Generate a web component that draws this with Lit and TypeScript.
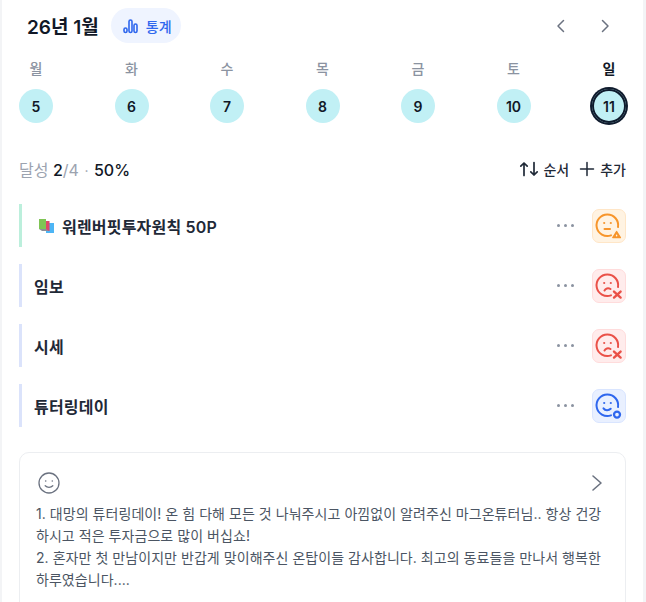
import { html, css, svg, LitElement } from 'lit';
import { customElement } from 'lit/decorators.js';

const days = [
  { label: '월', num: 5 },
  { label: '화', num: 6 },
  { label: '수', num: 7 },
  { label: '목', num: 8 },
  { label: '금', num: 9 },
  { label: '토', num: 10 },
  { label: '일', num: 11, today: true },
];

type Tone = 'warn' | 'fail' | 'done';

const tasks: { title: string; tone: Tone; bar: string; emoji?: boolean }[] = [
  { title: '워렌버핏투자원칙 50P', tone: 'warn', bar: 'mint', emoji: true },
  { title: '임보', tone: 'fail', bar: 'blue' },
  { title: '시세', tone: 'fail', bar: 'blue' },
  { title: '튜터링데이', tone: 'done', bar: 'blue' },
];

const mouth = {
  warn: svg`<path d="M12.5 20h5.5" />`,
  fail: svg`<path d="M12.5 21.5c1-2 3.5-3 6-1.5" />`,
  done: svg`<path d="M11.5 19.4c1.6 2.4 5.2 2.4 7.2.4" />`,
};

const badge = {
  warn: svg`<path d="M24.6 22.6l3.8 6h-7.6z" fill="currentColor" stroke-width="1.4" stroke-linejoin="round" /><path d="M24.6 26.2v.6" stroke="#fff3e2" stroke-width="1.4" />`,
  fail: svg`<path d="M22 22.6l6.6 6M28.6 22.6l-6.6 6" stroke-width="2.4" />`,
  done: svg`<circle cx="25" cy="25.6" r="3" fill="none" stroke-width="2.3" />`,
};

function faceIcon(tone: Tone) {
  return html`<svg width="34" height="34" viewBox="0 0 34 34" fill="none" stroke="currentColor" stroke-width="2" stroke-linecap="round">
    <path d="M19 26.4A10.8 10.8 0 1 1 26 18" />
    <circle cx="12.2" cy="14" r="1.1" fill="currentColor" stroke="none" />
    <circle cx="18.8" cy="14" r="1.1" fill="currentColor" stroke="none" />
    ${mouth[tone]} ${badge[tone]}
  </svg>`;
}

const chevronLeft = html`<svg width="16" height="16" viewBox="0 0 16 16" fill="none" stroke="currentColor" stroke-width="1.5" stroke-linecap="round" stroke-linejoin="round"><path d="M10.5 2.5L5 8l5.5 5.5" /></svg>`;
const chevronRight = html`<svg width="16" height="16" viewBox="0 0 16 16" fill="none" stroke="currentColor" stroke-width="1.5" stroke-linecap="round" stroke-linejoin="round"><path d="M5.5 2.5L11 8l-5.5 5.5" /></svg>`;

@customElement('app-root')
export class AppRoot extends LitElement {
  static styles = css`
    :host {
      display: block;
      height: 602px;
      overflow: hidden;
      background: #fff;
      font-family: Inter, 'Noto Sans CJK KR', sans-serif;
      color: #111827;
      border-left: 2px solid #f3f4f6;
      border-right: 3px solid #f3f4f6;
      box-sizing: border-box;
    }
    .page {
      display: flex;
      flex-direction: column;
      padding: 8px 17px 0 17px;
    }
    .head {
      display: flex;
      align-items: center;
      height: 35px;
    }
    .title {
      margin-left: 8px;
      font-size: 19px;
      font-weight: 600;
    }
    .pill {
      display: flex;
      align-items: center;
      gap: 8px;
      height: 35px;
      width: 70px;
      box-sizing: border-box;
      padding-left: 12px;
      margin-left: 12px;
      border-radius: 18px;
      background: #eff4ff;
      color: #2f67ee;
      font-size: 14px;
      font-weight: 500;
    }
    .nav {
      margin-left: auto;
      display: flex;
      gap: 28px;
      margin-right: 13px;
      color: #6b7280;
    }
    .nav svg {
      display: block;
    }
    .week {
      display: flex;
      justify-content: space-between;
      margin-top: 16px;
    }
    .day {
      width: 34px;
      display: flex;
      flex-direction: column;
      align-items: center;
      gap: 10px;
    }
    .day-label {
      font-size: 14px;
      line-height: 20px;
      font-weight: 500;
      color: #8b93a1;
    }
    .day-label.today {
      color: #111827;
      font-weight: 600;
    }
    .circle {
      width: 34px;
      height: 34px;
      border-radius: 50%;
      display: flex;
      align-items: center;
      justify-content: center;
      background: #c1f0f5;
      font-size: 14px;
      font-weight: 600;
    }
    .circle.today {
      box-shadow: 0 0 0 2px #0f1b2d, inset 0 0 0 2px #0f1b2d;
    }
    .stats {
      display: flex;
      align-items: center;
      justify-content: space-between;
      margin-top: 34px;
      height: 24px;
    }
    .rate {
      font-size: 16px;
      color: #9ca3af;
    }
    .rate b {
      font-weight: 500;
      color: #111827;
    }
    .rate .dot {
      margin: 0 1px;
      font-size: 14px;
    }
    .actions {
      display: flex;
      gap: 9px;
      font-size: 14px;
      font-weight: 500;
      color: #1f2937;
    }
    .action {
      display: flex;
      align-items: center;
      gap: 4px;
    }
    .tasks {
      display: flex;
      flex-direction: column;
      gap: 17px;
      margin-top: 23px;
    }
    .task {
      display: flex;
      align-items: center;
      height: 43px;
      padding-left: 12px;
      border-left: 3px solid #dbe3fb;
    }
    .task.mint {
      border-left-color: #bcefdc;
    }
    .task-title {
      flex: 1;
      display: flex;
      align-items: center;
      gap: 7px;
      font-size: 16px;
      font-weight: 600;
      letter-spacing: 0.2px;
      color: #1f2937;
    }
    .emoji {
      margin-left: 4px;
    }
    .more {
      display: flex;
      gap: 4px;
      margin-right: 18px;
    }
    .more i {
      width: 3px;
      height: 3px;
      border-radius: 50%;
      background: #8b93a1;
    }
    .face {
      width: 34px;
      height: 34px;
      box-sizing: border-box;
      border-radius: 7px;
      border: 1px solid;
      display: flex;
      align-items: center;
      justify-content: center;
    }
    .face svg {
      flex: none;
      display: block;
    }
    .face.warn {
      background: #fff3e2;
      border-color: #ffe6c7;
      color: #f7952b;
    }
    .face.fail {
      background: #ffecec;
      border-color: #ffdcdc;
      color: #ea5148;
    }
    .face.done {
      background: #e9f0ff;
      border-color: #d9e5ff;
      color: #2f67ee;
    }
    .card {
      margin-top: 25px;
      padding: 19px 16px 0;
      height: 200px;
      box-sizing: border-box;
      border: 1px solid #eceef1;
      border-radius: 10px;
    }
    .card-top {
      display: flex;
      align-items: center;
      justify-content: space-between;
      padding: 0 4px 0 2px;
      color: #6b7280;
    }
    .card-top svg {
      display: block;
    }
    .note {
      margin: 9px 0 0;
      font-size: 14px;
      line-height: 22px;
      color: #4b5563;
      letter-spacing: 0.05px;
    }
  `;

  render() {
    return html`
      <div class="page">
        <div class="head">
          <span class="title">26년 1월</span>
          <div class="pill">
            <svg width="15" height="16" viewBox="0 0 15 16" fill="none" stroke="currentColor" stroke-width="1.6">
              <rect x="1" y="10" width="3" height="4.5" rx="1.5" />
              <rect x="6" y="2" width="3" height="12.5" rx="1.5" />
              <rect x="11" y="6" width="3" height="8.5" rx="1.5" />
            </svg>
            통계
          </div>
          <div class="nav">${chevronLeft}${chevronRight}</div>
        </div>
        <div class="week">
          ${days.map(
            (d) => html`<div class="day">
              <span class="day-label ${d.today ? 'today' : ''}">${d.label}</span>
              <div class="circle ${d.today ? 'today' : ''}">${d.num}</div>
            </div>`,
          )}
        </div>
        <div class="stats">
          <span class="rate">달성 <b>2</b>/4 <span class="dot">·</span> <b>50%</b></span>
          <div class="actions">
            <span class="action">
              <svg width="20" height="16" viewBox="0 0 20 16" fill="none" stroke="currentColor" stroke-width="1.7" stroke-linecap="round" stroke-linejoin="round">
                <path d="M5 14.5V2M1.8 5.2L5 2l3.2 3.2" />
                <path d="M15 1.5V14M11.8 10.8L15 14l3.2-3.2" />
              </svg>
              순서
            </span>
            <span class="action">
              <svg width="18" height="16" viewBox="0 0 18 16" fill="none" stroke="currentColor" stroke-width="1.5" stroke-linecap="round">
                <path d="M9 1.5v13M2.5 8h13" />
              </svg>
              추가
            </span>
          </div>
        </div>
        <div class="tasks">
          ${tasks.map(
            (t) => html`<div class="task ${t.bar}">
              <span class="task-title">
                ${t.emoji
                  ? html`<svg class="emoji" width="17" height="16" viewBox="0 0 17 16">
                      <rect x="8" y="5" width="8" height="10" fill="#4db5f5" />
                      <rect x="4.5" y="3" width="7" height="10" fill="#e0456b" />
                      <rect x="1" y="1" width="7" height="10" fill="#7fc455" />
                      <path d="M1 11h7l3 2H4z" fill="#8a8f98" />
                    </svg>`
                  : ''}
                ${t.title}
              </span>
              <div class="more"><i></i><i></i><i></i></div>
              <div class="face ${t.tone}">${faceIcon(t.tone)}</div>
            </div>`,
          )}
        </div>
        <div class="card">
          <div class="card-top">
            <svg width="22" height="22" viewBox="0 0 22 22" fill="none" stroke="currentColor" stroke-width="1.3" stroke-linecap="round">
              <circle cx="11" cy="11" r="10" />
              <circle cx="7.7" cy="9" r="0.8" fill="currentColor" stroke="none" />
              <circle cx="14.3" cy="9" r="0.8" fill="currentColor" stroke="none" />
              <path d="M7.2 13.8c2 2 5.6 2 7.6 0" />
            </svg>
            <svg width="16" height="18" viewBox="0 0 16 18" fill="none" stroke="currentColor" stroke-width="1.6" stroke-linecap="round" stroke-linejoin="round"><path d="M4 2l8 7-8 7" /></svg>
          </div>
          <p class="note">
            1. 대망의 튜터링데이! 온 힘 다해 모든 것 나눠주시고 아낌없이 알려주신 마그온튜터님.. 항상 건강<br />하시고 적은 투자금으로 많이 버십쇼!<br />
            2. 혼자만 첫 만남이지만 반갑게 맞이해주신 온탑이들 감사합니다. 최고의 동료들을 만나서 행복한<br />하루였습니다....
          </p>
        </div>
      </div>
    `;
  }
}
